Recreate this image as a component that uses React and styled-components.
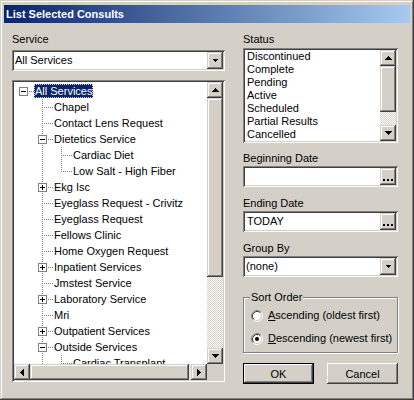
import React from "react";
import styled, { createGlobalStyle, css } from "styled-components";

const GlobalStyle = createGlobalStyle`
  html, body { margin: 0; padding: 0; background: #d4d0c8; }
  body {
    font-family: "Liberation Sans", Arial, sans-serif;
    font-size: 11px;
    color: #000;
  }
`;

const face = "#d4d0c8";

const raised = css`
  box-shadow: inset -1px -1px #404040, inset 1px 1px ${face},
    inset -2px -2px #808080, inset 2px 2px #fff;
`;

const sunken = css`
  box-shadow: inset 1px 1px #808080, inset -1px -1px #fff,
    inset 2px 2px #404040, inset -2px -2px ${face};
`;

const checker = css`
  background-color: #fff;
  background-image: conic-gradient(${face} 25%, #fff 0 50%, ${face} 0 75%, #fff 0);
  background-size: 2px 2px;
`;

const Window = styled.div`
  width: 414px;
  height: 400px;
  box-sizing: border-box;
  padding: 4px;
  background: ${face};
  box-shadow: inset -1px -1px #404040, inset 1px 1px ${face},
    inset -2px -2px #808080, inset 2px 2px #fff;
  display: flex;
  flex-direction: column;
  overflow: hidden;
`;

const TitleBar = styled.div`
  height: 18px;
  margin-top: 1px;
  padding-left: 2px;
  background: linear-gradient(90deg, #0a246a, #a6caf0);
  color: #fff;
  font-weight: bold;
  font-size: 11px;
  line-height: 18px;
`;

const Client = styled.div`
  display: flex;
  gap: 18px;
  padding: 10px 12px 0 8px;
`;

const Column = styled.div`
  display: flex;
  flex-direction: column;
  width: ${(p) => p.width}px;
`;

const Label = styled.div`
  height: 13px;
  line-height: 13px;
  margin-top: ${(p) => p.gap || 0}px;
  white-space: nowrap;
`;

const Combo = styled.div`
  height: 21px;
  margin-top: ${(p) => p.gap || 0}px;
  box-sizing: border-box;
  padding: 2px;
  background: #fff;
  ${sunken};
  display: flex;
`;

const BoxText = styled.div`
  flex: 1;
  padding-left: ${(p) => p.indent || 1}px;
  line-height: 17px;
  white-space: nowrap;
  overflow: hidden;
`;

const SideButton = styled.div`
  width: 16px;
  flex: none;
  background: ${face};
  ${raised};
  display: flex;
  align-items: ${(p) => (p.bottom ? "flex-end" : "center")};
  justify-content: center;
  padding-bottom: ${(p) => (p.bottom ? 4 : 0)}px;
  box-sizing: border-box;
`;

const Arrow = ({ dir, w = 7 }) => {
  const rows = Math.ceil(w / 2);
  const rects = [];
  for (let i = 0; i < rows; i++) {
    const y = dir === "down" || dir === "right" ? i : rows - 1 - i;
    rects.push(<rect key={i} x={i} y={y} width={w - 2 * i} height={1} />);
  }
  const horiz = dir === "left" || dir === "right";
  return (
    <svg
      width={horiz ? rows : w}
      height={horiz ? w : rows}
      shapeRendering="crispEdges"
      fill="#000"
    >
      <g transform={horiz ? `matrix(0 1 1 0 0 0)` : undefined}>{rects}</g>
    </svg>
  );
};

const Dots = () => (
  <svg width="10" height="2" shapeRendering="crispEdges" fill="#000">
    <rect x="0" y="0" width="2" height="2" />
    <rect x="4" y="0" width="2" height="2" />
    <rect x="8" y="0" width="2" height="2" />
  </svg>
);

/* scroll bars */
const VBar = styled.div`
  display: flex;
  flex-direction: column;
  width: 16px;
  ${checker};
`;

const HBar = styled.div`
  display: flex;
  height: 16px;
  ${checker};
`;

const ScrollBtn = styled.div`
  width: 16px;
  height: 16px;
  flex: none;
  box-sizing: border-box;
  background: ${face};
  ${raised};
  display: flex;
  align-items: center;
  justify-content: center;
`;

const Thumb = styled.div`
  flex: none;
  background: ${face};
  ${raised};
  ${(p) => (p.vertical ? `height: ${p.size}px;` : `width: ${p.size}px;`)}
`;

const Track = styled.div`
  flex: 1;
`;

const Corner = styled.div`
  background: ${face};
`;

/* tree */
const TreeBox = styled.div`
  height: 302px;
  margin-top: 9px;
  box-sizing: border-box;
  padding: 2px;
  background: #fff;
  ${sunken};
  display: grid;
  grid-template-columns: 1fr 16px;
  grid-template-rows: 1fr 16px;
`;

const TreeContent = styled.div`
  overflow: hidden;
  padding: 1px 0 0 1px;
`;

const TreeRow = styled.div`
  display: flex;
  align-items: center;
  height: 16px;
  white-space: nowrap;
`;

const NodeText = styled.span`
  display: inline-block;
  height: 14px;
  line-height: 14px;
  padding: 0 1px;
  ${(p) =>
    p.selected &&
    css`
      background: #0a246a;
      color: #fff;
      outline: 1px dotted #d8d0a0;
      outline-offset: -1px;
    `}
`;

const Gutter = ({ type, box }) => {
  const dots = [];
  const v = (y0, y1) => {
    for (let y = y0; y <= y1; y += 2)
      dots.push(<rect key={`v${y}`} x={8} y={y} width={1} height={1} />);
  };
  const h = (x0) => {
    for (let x = x0; x <= 18; x += 2)
      dots.push(<rect key={`h${x}`} x={x} y={8} width={1} height={1} />);
  };
  if (type === "pipe") v(0, 15);
  if (type === "tee") {
    if (box) {
      v(0, 2);
      v(14, 15);
    } else v(0, 15);
    h(box ? 14 : 10);
  }
  if (type === "elbow") {
    v(0, 8);
    h(10);
  }
  if (type === "root") h(14);
  return (
    <svg width="19" height="16" shapeRendering="crispEdges" style={{ flex: "none" }}>
      <g fill="#808080">{dots}</g>
      {box && (
        <g>
          <rect x="4.5" y="4.5" width="8" height="8" fill="#fff" stroke="#808080" />
          <rect x="6" y="8" width="5" height="1" fill="#000" />
          {box === "+" && <rect x="8" y="6" width="1" height="5" fill="#000" />}
        </g>
      )}
    </svg>
  );
};

const treeItems = [
  { label: "All Services", level: 0, box: "-", selected: true },
  { label: "Chapel", level: 1 },
  { label: "Contact Lens Request", level: 1 },
  { label: "Dietetics Service", level: 1, box: "-" },
  { label: "Cardiac Diet", level: 2 },
  { label: "Low Salt - High Fiber", level: 2, last: true },
  { label: "Ekg Isc", level: 1, box: "+" },
  { label: "Eyeglass Request - Crivitz", level: 1 },
  { label: "Eyeglass Request", level: 1 },
  { label: "Fellows Clinic", level: 1 },
  { label: "Home Oxygen Request", level: 1 },
  { label: "Inpatient Services", level: 1, box: "+" },
  { label: "Jmstest Service", level: 1 },
  { label: "Laboratory Service", level: 1, box: "+" },
  { label: "Mri", level: 1 },
  { label: "Outpatient Services", level: 1, box: "+" },
  { label: "Outside Services", level: 1, box: "-" },
  { label: "Cardiac Transplant", level: 2 },
];

function gutterCells(item) {
  if (item.level === 0) return [<Gutter key="0" type="root" box={item.box} />];
  const cells = [<Gutter key="0" type="blank" />];
  if (item.level === 1) cells.push(<Gutter key="1" type="tee" box={item.box} />);
  if (item.level === 2) {
    cells.push(<Gutter key="1" type="pipe" />);
    cells.push(<Gutter key="2" type={item.last ? "elbow" : "tee"} />);
  }
  return cells;
}

/* list box */
const ListBox = styled.div`
  height: 95px;
  margin-top: 2px;
  box-sizing: border-box;
  padding: 2px;
  background: #fff;
  ${sunken};
  display: flex;
`;

const ListItems = styled.div`
  flex: 1;
  padding-left: 2px;
`;

const ListItem = styled.div`
  height: 13px;
  line-height: 13px;
`;

/* sort order */
const GroupBox = styled.fieldset`
  margin: 14px 0 0 0;
  padding: 5px 0 7px 7px;
  border: 1px solid #808080;
  box-shadow: inset 1px 1px #fff, 1px 1px #fff;
  display: flex;
  flex-direction: column;
  gap: 10px;
  min-width: 0;
`;

const Legend = styled.legend`
  margin-left: -1px;
  padding: 0 1px;
  line-height: 13px;
  background: ${face};
`;

const RadioRow = styled.label`
  display: flex;
  align-items: center;
  gap: 5px;
  height: 13px;
  line-height: 13px;
  white-space: nowrap;
`;

const Radio = ({ checked }) => (
  <svg width="12" height="12" style={{ flex: "none" }}>
    <circle cx="6" cy="6" r="4.2" fill="#fff" />
    <path d="M2.11 9.89 A5.5 5.5 0 0 1 9.89 2.11" fill="none" stroke="#808080" />
    <path d="M9.89 2.11 A5.5 5.5 0 0 1 2.11 9.89" fill="none" stroke="#fff" />
    <path d="M2.82 9.18 A4.5 4.5 0 0 1 9.18 2.82" fill="none" stroke="#404040" />
    <path d="M9.18 2.82 A4.5 4.5 0 0 1 2.82 9.18" fill="none" stroke={face} />
    {checked && <circle cx="6" cy="6" r="2" fill="#000" />}
  </svg>
);

const Buttons = styled.div`
  display: flex;
  justify-content: space-between;
  margin-top: 10px;
`;

const Button = styled.button`
  width: 71px;
  height: 21px;
  padding: 0;
  border: 0;
  background: ${face};
  font: 11px "Liberation Sans", Arial, sans-serif;
  color: #000;
  ${(p) =>
    p.primary
      ? css`
          box-shadow: inset 0 0 0 1px #000, inset -2px -2px #404040,
            inset 2px 2px #fff, inset -3px -3px #808080;
        `
      : css`
          box-shadow: inset -1px -1px #404040, inset 1px 1px #fff,
            inset -2px -2px #808080, inset 2px 2px ${face};
        `}
`;

const statuses = [
  "Discontinued",
  "Complete",
  "Pending",
  "Active",
  "Scheduled",
  "Partial Results",
  "Cancelled",
];

export default function App() {
  return (
    <>
      <GlobalStyle />
      <Window>
        <TitleBar>List Selected Consults</TitleBar>
        <Client>
          <Column width={213}>
            <Label>Service</Label>
            <Combo gap={4}>
              <BoxText>All Services</BoxText>
              <SideButton>
                <Arrow dir="down" w={5} />
              </SideButton>
            </Combo>
            <TreeBox>
              <TreeContent>
                {treeItems.map((item) => (
                  <TreeRow key={item.label}>
                    {gutterCells(item)}
                    <NodeText selected={item.selected}>{item.label}</NodeText>
                  </TreeRow>
                ))}
              </TreeContent>
              <VBar>
                <ScrollBtn>
                  <Arrow dir="up" />
                </ScrollBtn>
                <Thumb vertical size={179} />
                <Track />
                <ScrollBtn>
                  <Arrow dir="down" />
                </ScrollBtn>
              </VBar>
              <HBar>
                <ScrollBtn>
                  <Arrow dir="left" />
                </ScrollBtn>
                <Thumb size={159} />
                <Track />
                <ScrollBtn>
                  <Arrow dir="right" />
                </ScrollBtn>
              </HBar>
              <Corner />
            </TreeBox>
          </Column>

          <Column width={155}>
            <Label>Status</Label>
            <ListBox>
              <ListItems>
                {statuses.map((s) => (
                  <ListItem key={s}>{s}</ListItem>
                ))}
              </ListItems>
              <VBar>
                <ScrollBtn>
                  <Arrow dir="up" />
                </ScrollBtn>
                <Thumb vertical size={46} />
                <Track />
                <ScrollBtn>
                  <Arrow dir="down" />
                </ScrollBtn>
              </VBar>
            </ListBox>

            <Label gap={9}>Beginning Date</Label>
            <Combo gap={1}>
              <BoxText indent={2}></BoxText>
              <SideButton bottom>
                <Dots />
              </SideButton>
            </Combo>

            <Label gap={10}>Ending Date</Label>
            <Combo gap={1}>
              <BoxText indent={2}>TODAY</BoxText>
              <SideButton bottom>
                <Dots />
              </SideButton>
            </Combo>

            <Label gap={10}>Group By</Label>
            <Combo gap={1}>
              <BoxText>(none)</BoxText>
              <SideButton>
                <Arrow dir="down" w={5} />
              </SideButton>
            </Combo>

            <GroupBox>
              <Legend>Sort Order</Legend>
              <RadioRow>
                <Radio />
                <span>
                  <u>A</u>scending (oldest first)
                </span>
              </RadioRow>
              <RadioRow>
                <Radio checked />
                <span>
                  <u>D</u>escending (newest first)
                </span>
              </RadioRow>
            </GroupBox>

            <Buttons>
              <Button primary>OK</Button>
              <Button>Cancel</Button>
            </Buttons>
          </Column>
        </Client>
      </Window>
    </>
  );
}
